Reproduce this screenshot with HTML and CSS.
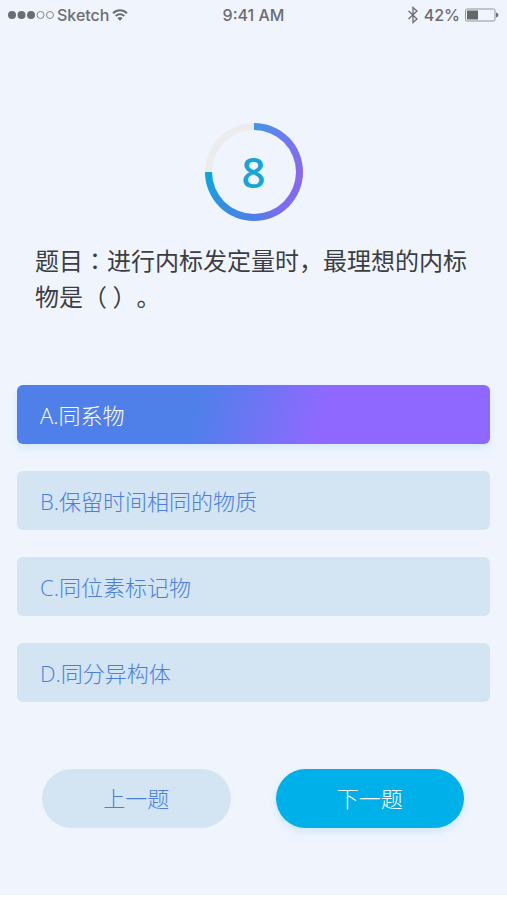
FILE: index.html
```html
<!DOCTYPE html>
<html lang="zh-CN">
<head>
<meta charset="UTF-8" />
<meta name="viewport" content="width=device-width, initial-scale=1" />
<title>答题</title>
<link rel="stylesheet" href="styles.css">
</head>
<body>

<div class="screen">
  <header class="status-bar">
    <div class="status-left">
      <svg class="signal" width="46" height="10" viewBox="0 0 46 10" aria-hidden="true">
        <g fill="#6b6d72">
          <circle cx="4" cy="5" r="4" />
          <circle cx="13.5" cy="5" r="4" />
          <circle cx="23" cy="5" r="4" />
        </g>
        <g fill="none" stroke="#85878c">
          <circle cx="32.5" cy="5" r="3.5" />
          <circle cx="42" cy="5" r="3.5" />
        </g>
      </svg>
      <span>Sketch</span>
      <svg width="16" height="12" viewBox="0 0 16 12" fill="none" stroke="#6b6d72" stroke-width="2" aria-hidden="true">
        <path d="M1 4.2a10 10 0 0 1 14 0" />
        <path d="M3.7 7a6.2 6.2 0 0 1 8.6 0" />
        <path d="M8 11.8L5.4 9.2a3.7 3.7 0 0 1 5.2 0z" fill="#6b6d72" stroke="none" />
      </svg>
    </div>
    <span class="time">9:41 AM</span>
    <div class="status-right">
      <svg width="12" height="18" viewBox="0 0 12 18" fill="none" stroke="#6b6d72" stroke-width="1.3" aria-hidden="true">
        <path d="M1.5 5l8.5 8-4 3.5v-15l4 3.5-8.5 8" />
      </svg>
      <span>42%</span>
      <svg width="34" height="14" viewBox="0 0 34 14" aria-hidden="true">
        <rect x="0.5" y="1" width="29.5" height="12" rx="1.5" fill="none" stroke="#909297" />
        <rect x="2" y="2.5" width="11" height="9" fill="#65676b" />
        <path d="M31 4.5q2.5 .8 2.5 2.5t-2.5 2.5z" fill="#6b6d72" />
      </svg>
    </div>
  </header>

  <main class="quiz">
    <div class="progress-ring">
      <div class="progress-num">8</div>
    </div>

    <h1 class="question">题目<span lang="zh-TW" class="colon">：</span>进行内标发定量时，最理想的内标物是（ ）。</h1>

    <div class="options">
      <button class="option active" type="button">A.同系物</button>
      <button class="option" type="button">B.保留时间相同的物质</button>
      <button class="option" type="button">C.同位素标记物</button>
      <button class="option" type="button">D.同分异构体</button>
    </div>

    <div class="actions">
      <button class="btn btn-prev" type="button">上一题</button>
      <button class="btn btn-next" type="button">下一题</button>
    </div>
  </main>
</div>

</body>
</html>
```

FILE: styles.css
```css
* {
  box-sizing: border-box;
}
body {
  margin: 0;
  background: #fefefe;
  font-family: "Open Sans", "Noto Sans CJK SC", sans-serif;
  color: #3b3d42;
}
button {
  font-family: inherit;
  border: none;
  cursor: pointer;
}
.screen {
  background: #f0f5fd;
}

/* status bar */
.status-bar {
  display: grid;
  grid-template-columns: 1fr auto 1fr;
  align-items: center;
  height: 30px;
  padding: 0 8px;
  font-family: Inter, sans-serif;
  font-size: 16px;
  font-weight: 500;
  color: #6b6d72;
}
.status-left, .status-right {
  display: flex;
  align-items: center;
}
.status-left {
  gap: 3px;
}
.status-right {
  justify-content: flex-end;
  gap: 5px;
}

/* quiz */
.quiz {
  padding: 93px 17px 67px;
}
.progress-ring {
  width: 98px;
  height: 98px;
  margin: 0 auto 21px;
  padding: 7px;
  border-radius: 50%;
  background: conic-gradient(#3f96e8 0deg, #6b7cf0 40deg, #8768ee 90deg, #7d6cf0 140deg, #4a80e8 185deg, #2f90e2 225deg, #0ca6dc 270deg, #ececee 270deg);
}
.progress-num {
  display: flex;
  align-items: center;
  justify-content: center;
  height: 100%;
  padding-bottom: 2px;
  border-radius: 50%;
  background: #f0f5fd;
  font-size: 42px;
  font-weight: 600;
  color: #17a5d8;
}
.question {
  margin: 0 14px 71px 18px;
  font-family: "Noto Sans CJK SC", sans-serif;
  font-size: 24px;
  font-weight: 400;
  line-height: 36px;
  text-spacing-trim: space-all;
}
.colon {
  font-family: "Noto Sans CJK TC", sans-serif;
}
.options {
  display: flex;
  flex-direction: column;
  gap: 27px;
}
.option {
  height: 59px;
  padding: 0 23px 2px;
  border-radius: 6px;
  background: #d3e4f3;
  font-size: 22px;
  font-weight: 300;
  text-align: left;
  color: #4a80dc;
}
.option.active {
  background: linear-gradient(105deg, #4f80ea 38%, #8f69ff 64%);
  box-shadow: 0 4px 8px #d3e8fc;
  color: #fff;
}
.actions {
  display: flex;
  gap: 45px;
  margin-top: 67px;
  padding: 0 26px 0 25px;
}
.btn {
  flex: 1;
  height: 59px;
  padding: 0 0 4px;
  border-radius: 30px;
  font-size: 22px;
  font-weight: 300;
}
.btn-prev {
  background: #d3e4f3;
  color: #4a80dc;
}
.btn-next {
  background: #00b0e8;
  box-shadow: 0 4px 8px #cfe6f8;
  color: #fff;
}
```
